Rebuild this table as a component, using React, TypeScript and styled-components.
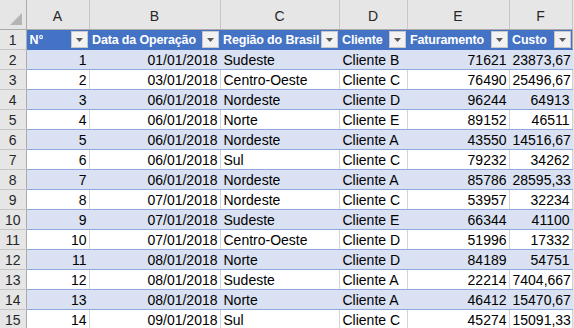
import React from 'react';
import styled, { createGlobalStyle } from 'styled-components';

const GlobalStyle = createGlobalStyle`
  html, body {
    margin: 0;
    padding: 0;
    background: #ffffff;
    overflow: hidden;
  }
`;

const Sheet = styled.table`
  border-collapse: collapse;
  table-layout: fixed;
  width: 574px;
  font-family: 'Liberation Sans', Arial, sans-serif;
  font-size: 14px;
  color: #000;
`;

const CornerCell = styled.th`
  height: 27px;
  padding: 0;
  background: #e6e6e6;
  border-right: 1px solid #ababab;
  border-bottom: 1px solid #ababab;
  vertical-align: bottom;
`;

const ColLetter = styled.th`
  height: 27px;
  padding: 2px 0 0;
  background: #e6e6e6;
  border-right: 1px solid #c6c6c6;
  border-bottom: 1px solid #ababab;
  font-weight: normal;
  font-size: 14px;
  color: #262626;
  text-align: center;
  vertical-align: middle;
`;

const RowNum = styled.th`
  height: 19px;
  padding: 0;
  background: #e6e6e6;
  border-right: 1px solid #ababab;
  border-bottom: 1px solid #c6c6c6;
  font-weight: normal;
  font-size: 14px;
  color: #262626;
  text-align: center;
`;

const HeadCell = styled.td`
  height: 19px;
  padding: 0;
  background: #4472c4;
  border-bottom: 1px solid #4472c4;
`;

const HeadInner = styled.div`
  display: flex;
  align-items: center;
  justify-content: space-between;
  gap: 1px;
  padding-left: 3px;
  color: #ffffff;
  font-size: 12.5px;
  font-weight: bold;
  letter-spacing: -0.15px;
  white-space: nowrap;
`;

const HeadLabel = styled.span`
  min-width: 0;
  overflow: hidden;
`;

const FilterButton = styled.span`
  display: flex;
  align-items: center;
  justify-content: center;
  flex: none;
  width: 15px;
  height: 15px;
  margin-right: 1px;
  background: #f2f2f2;
  border: 1px solid #c8c8c8;
`;

const Cell = styled.td<{ $num?: boolean; $band?: boolean }>`
  height: 19px;
  padding: 0 2px 0 3px;
  background: ${(p) => (p.$band ? '#d9e1f2' : '#ffffff')};
  border-right: 1px solid ${(p) => (p.$band ? '#d9e1f2' : '#d4d4d4')};
  border-bottom: 1px solid #8ea9db;
  text-align: ${(p) => (p.$num ? 'right' : 'left')};
  white-space: nowrap;
  overflow: hidden;
`;

const Filler = styled.td`
  padding: 0;
  background: #e6e6e6;
  border-left: 1px solid #ababab;
`;

const columns = ['N°', 'Data da Operação', 'Região do Brasil', 'Cliente', 'Faturamento', 'Custo'];
const widths = [26, 63, 131, 119, 68, 102, 63, 2];

const rows: [number, string, string, string, number, string][] = [
  [1, '01/01/2018', 'Sudeste', 'Cliente B', 71621, '23873,67'],
  [2, '03/01/2018', 'Centro-Oeste', 'Cliente C', 76490, '25496,67'],
  [3, '06/01/2018', 'Nordeste', 'Cliente D', 96244, '64913'],
  [4, '06/01/2018', 'Norte', 'Cliente E', 89152, '46511'],
  [5, '06/01/2018', 'Nordeste', 'Cliente A', 43550, '14516,67'],
  [6, '06/01/2018', 'Sul', 'Cliente C', 79232, '34262'],
  [7, '06/01/2018', 'Nordeste', 'Cliente A', 85786, '28595,33'],
  [8, '07/01/2018', 'Nordeste', 'Cliente C', 53957, '32234'],
  [9, '07/01/2018', 'Sudeste', 'Cliente E', 66344, '41100'],
  [10, '07/01/2018', 'Centro-Oeste', 'Cliente D', 51996, '17332'],
  [11, '08/01/2018', 'Norte', 'Cliente D', 84189, '54751'],
  [12, '08/01/2018', 'Sudeste', 'Cliente A', 22214, '7404,667'],
  [13, '08/01/2018', 'Norte', 'Cliente A', 46412, '15470,67'],
  [14, '09/01/2018', 'Sul', 'Cliente C', 45274, '15091,33'],
];

function Arrow() {
  return (
    <svg width="7" height="4" viewBox="0 0 7 4">
      <path d="M0 0 H7 L3.5 4 Z" fill="#595959" />
    </svg>
  );
}

function App() {
  return (
    <>
      <GlobalStyle />
      <Sheet>
        <colgroup>
          {widths.map((w, i) => (
            <col key={i} style={{ width: w }} />
          ))}
        </colgroup>
        <thead>
          <tr>
            <CornerCell>
              <svg width="14" height="14" viewBox="0 0 14 14" style={{ display: 'block', marginLeft: 9, marginBottom: 3 }}>
                <path d="M13 1 V13 H1 Z" fill="#b4b4b4" />
              </svg>
            </CornerCell>
            {['A', 'B', 'C', 'D', 'E', 'F'].map((l) => (
              <ColLetter key={l}>{l}</ColLetter>
            ))}
            <Filler />
          </tr>
        </thead>
        <tbody>
          <tr>
            <RowNum>1</RowNum>
            {columns.map((c) => (
              <HeadCell key={c}>
                <HeadInner>
                  <HeadLabel>{c}</HeadLabel>
                  <FilterButton>
                    <Arrow />
                  </FilterButton>
                </HeadInner>
              </HeadCell>
            ))}
            <Filler />
          </tr>
          {rows.map((r, i) => {
            const band = i % 2 === 0;
            return (
              <tr key={r[0]}>
                <RowNum>{i + 2}</RowNum>
                <Cell $num $band={band}>{r[0]}</Cell>
                <Cell $num $band={band}>{r[1]}</Cell>
                <Cell $band={band}>{r[2]}</Cell>
                <Cell $band={band}>{r[3]}</Cell>
                <Cell $num $band={band}>{r[4]}</Cell>
                <Cell $num $band={band}>{r[5]}</Cell>
                <Filler />
              </tr>
            );
          })}
        </tbody>
      </Sheet>
    </>
  );
}

export default App;
